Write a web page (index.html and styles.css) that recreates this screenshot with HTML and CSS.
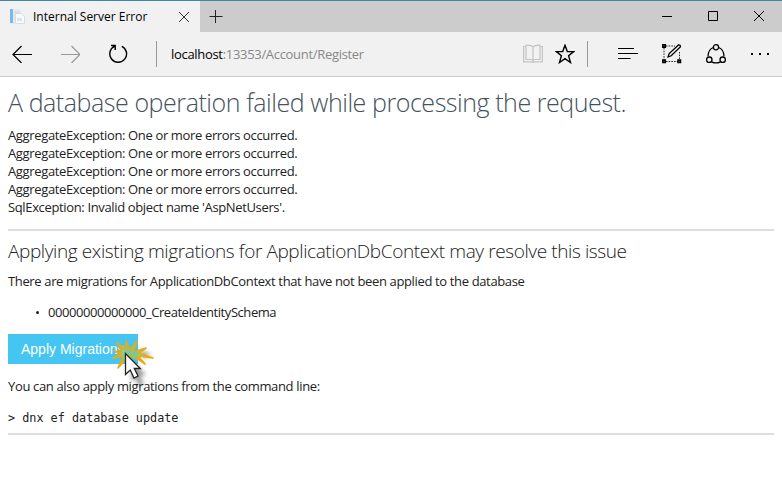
FILE: index.html
```html
<!DOCTYPE html>
<html lang="en">
<head>
<meta charset="utf-8">
<title>Internal Server Error</title>
<link rel="stylesheet" href="styles.css">
</head>
<body>
<header class="browser">
  <div class="tabbar">
    <div class="tab">
      <svg class="favicon" width="16" height="16" viewBox="0 0 16 16"><path d="M1 0h10l1 2v13H1z" fill="#e6ebf0"/><path d="M1 0h3v14H1z" fill="#7dbbe2"/><path d="M5 3h6M5 9h2" stroke="#d0d8df"/><path d="M6.500 4.500h6l3 3v7h-9z" fill="#f6f8fa" stroke="#d8dde2"/><path d="M8 9h5v3H8z" fill="#dce3ea"/></svg>
      <span class="tab-title">Internal Server Error</span>
      <svg class="tab-close" width="12" height="12" viewBox="0 0 12 12"><path d="M1 1l10 10M11 1L1 11" stroke="#333" fill="none"/></svg>
    </div>
    <svg class="new-tab" width="14" height="14" viewBox="0 0 14 14"><path d="M.5 6.5h13M6.5 0v13" stroke="#222" fill="none"/></svg>
    <div class="window-controls">
      <svg width="12" height="12" viewBox="0 0 12 12"><path d="M1 6.5h10" stroke="#000"/></svg>
      <svg width="12" height="12" viewBox="0 0 12 12"><path d="M1.5 1.5h9v9h-9z" stroke="#000" fill="none"/></svg>
      <svg width="12" height="12" viewBox="0 0 12 12"><path d="M1 1l10 10M11 1L1 11" stroke="#000"/></svg>
    </div>
  </div>
  <nav class="toolbar">
    <svg class="back" width="20" height="18" viewBox="0 0 20 18"><path d="M1 9.5h19M9.5 1L1 9.5 9.5 18" fill="none" stroke="#000" stroke-width="1.2"/></svg>
    <svg class="forward" width="20" height="18" viewBox="0 0 20 18"><path d="M1 9.5h19M11.5 1L20 9.5 11.5 18" fill="none" stroke="#999" stroke-width="1.2"/></svg>
    <svg class="reload" width="20" height="20" viewBox="0 0 20 20"><path d="M13.8 2.3A8.4 8.4 0 1 1 6.8 2.2M3 1.5h4.200v4.500" fill="none" stroke="#000" stroke-width="1.4"/></svg>
    <span class="divider"></span>
    <div class="address"><span class="host">localhost</span>:13353/Account/Register</div>
    <svg class="reading" width="20" height="20" viewBox="0 0 20 20"><path d="M3 2.500H.6v15.300h7.900q1.500 0 1.500 1.200 0-1.200 1.500-1.200h7.900V2.500H17M10 3q-1.500-2-7-1.800v14.300H8q2 0 2 2 0-2 2-2h5V1.200Q11.500 1 10 3v14" fill="none" stroke="#c4c4c4" stroke-width="1.2"/></svg>
    <svg class="star" width="20" height="20" viewBox="0 0 20 20"><path d="M10 1.300l2.300 6.300h6.400l-5.100 4.100 1.900 6.800L10 14.600l-5.500 3.900 1.900-6.800L1.300 7.600h6.400z" fill="none" stroke="#000" stroke-width="1.4"/></svg>
    <span class="divider"></span>
    <svg class="hub" width="20" height="14" viewBox="0 0 20 14"><path d="M0 1.500h16M0 6.500h20M0 11.500h12.500" stroke="#000" stroke-width="1.2"/></svg>
    <svg class="note" width="20" height="20" viewBox="0 0 20 20"><path d="M4 2h9M2 4v12M4 17.500h12M17.500 8v8" fill="none" stroke="#222" stroke-dasharray="1.5 1.2"/><path d="M.8 .8h2.500v2.500H.8zM.8 16h2.500v2.500H.8zM16 16h2.500v2.500H16z" stroke="#000" stroke-width="1.5" fill="#777"/><path d="M6 13l1.200-3.500L16.500.900q2-.2 2 1.800L9.200 11.800z" fill="#f2f2f2" stroke="#000" stroke-width="1.3"/></svg>
    <svg class="share" width="20" height="20" viewBox="0 0 20 20"><g fill="none" stroke="#000" stroke-width="1.3"><path d="M7.300 3.500Q2 5.500 2 12.500M12.700 3.500Q18 5.500 18 12.500M5.500 17.800Q10 20 14.500 17.800"/><circle cx="10" cy="3.300" r="2.600"/><circle cx="3.300" cy="15.700" r="2.700"/><circle cx="16.700" cy="15.700" r="2.700"/></g></svg>
    <svg class="more" width="20" height="4" viewBox="0 0 20 4"><path d="M1 1h2v2H1zM9 1h2v2H9zM17 1h2v2h-2z"/></svg>
  </nav>
</header>
<main class="page">
  <h1>A database operation failed while processing the request.</h1>
  <p class="errors">AggregateException: One or more errors occurred.<br>AggregateException: One or more errors occurred.<br>AggregateException: One or more errors occurred.<br>AggregateException: One or more errors occurred.<br>SqlException: Invalid object name 'AspNetUsers'.</p>
  <hr>
  <h2>Applying existing migrations for ApplicationDbContext may resolve this issue</h2>
  <p class="pending">There are migrations for ApplicationDbContext that have not been applied to the database</p>
  <ul><li>00000000000000_CreateIdentitySchema</li></ul>
  <div class="action">
    <button type="button">Apply Migrations</button>
    <svg class="cursor" width="50" height="55" viewBox="0 0 50 55">
      <defs><filter id="shadow" x="-50%" y="-50%" width="200%" height="200%"><feGaussianBlur stdDeviation="2"/></filter></defs>
      <path d="M22 27l14 14-6 1 4 8-5 2-4-8-4 4zM28 15l14 6-8 2 4 8z" fill="#000" opacity=".4" filter="url(#shadow)"/>
      <path d="M27 7L20 16 16 7 16 16 7 9 12 18 4 17 11 20 3 24 13 22 8 34 17 24 19 22 28 25 35 30 28 22 43 24 29 19 36 14 23 18Z" fill="#7fca8c" fill-opacity=".85" stroke="#e8ac11" stroke-width="1.7" stroke-linejoin="round"/>
      <path d="M15.500 19.500v21l4.800-4.500 3.700 8 4-2-3.700-7.500h6z" fill="#fff" stroke="#222" stroke-width="1.3"/>
    </svg>
  </div>
  <p class="cli">You can also apply migrations from the command line:</p>
  <pre>&gt; dnx ef database update</pre>
  <hr>
</main>
</body>
</html>
```

FILE: styles.css
```css
* { box-sizing: border-box; }
body { margin: 0; background: #fff; color: #222; font: 13px/18px "Open Sans", "Noto Sans", sans-serif; letter-spacing: -.355px; }
svg { display: block; flex: none; }
.browser { height: 77px; background: #f1f1f1; border-top: 1px solid #3f88a3; border-bottom: 1px solid #ccc; }
.tabbar { display: flex; height: 31px; background: #ccc; }
.tab { display: flex; align-items: center; width: 200px; padding: 0 10px 0 9px; background: #f1f1f1; }
.tab-title { flex: 1; margin-left: 8px; color: #000; font-size: 12px; letter-spacing: 0; white-space: nowrap; }
.new-tab { margin: 9px 0 0 9px; }
.window-controls { display: flex; gap: 34px; margin: 9px 17px 0 auto; }
.toolbar { display: flex; align-items: center; height: 44px; padding-left: 12px; }
.forward { margin-left: 28px; }
.reload { margin-left: 28px; }
.divider { width: 1px; height: 26px; background: #999; }
.reload + .divider { margin-left: 28px; }
.address { flex: 1; margin-left: 14px; color: #888; letter-spacing: -.31px; white-space: nowrap; }
.host { color: #000; }
.star { margin-left: 12px; }
.star + .divider { margin-left: 12px; }
.hub { margin-left: 30px; }
.note { margin-left: 24px; }
.share { margin-left: 24px; }
.more { margin: 0 12px 0 24px; }
.page { padding: 10px 8px 0; }
h1, h2, p, ul, pre { margin: 0; white-space: nowrap; }
h1 { height: 30px; font-size: 25px; line-height: 30px; font-weight: 300; letter-spacing: -.44px; color: #44525e; }
.errors { margin-top: 9px; }
hr { height: 2px; margin: 13px 0 0; border: 0; background: #ddd; }
h2 { margin-top: 7px; font-size: 19px; line-height: 26px; font-weight: 300; letter-spacing: -.395px; }
.pending { margin-top: 8px; }
ul { margin-top: 13px; padding-left: 20px; list-style: none; }
li { display: flex; align-items: center; letter-spacing: -.44px; }
li::before { content: ""; width: 3px; height: 3px; margin: 1px 9px 0 8px; border-radius: 50%; background: #222; }
.action { position: relative; margin-top: 13px; height: 30px; }
button { width: 130px; height: 30px; padding: 0 0 0 13px; border: 0; background: #44c5f2; color: #fff; text-align: left; letter-spacing: 0; font: 14px "Liberation Sans", Arial, sans-serif; }
.cursor { position: absolute; left: 110px; top: 0; margin-left: -8px; }
.cli { margin-top: 13px; letter-spacing: -.345px; }
pre { margin-top: 14px; font: 11.8px/18px "DejaVu Sans Mono", monospace; letter-spacing: 0; }
pre + hr { margin-top: 6px; }
```
